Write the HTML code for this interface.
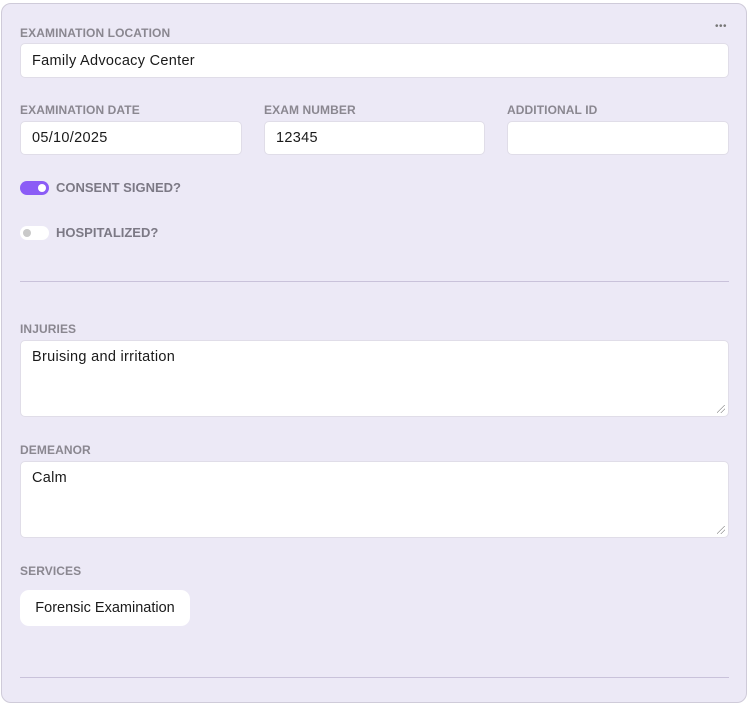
<!DOCTYPE html>
<html><head><meta charset="utf-8"><style>
*{box-sizing:border-box;margin:0;padding:0}
body{width:748px;height:687px;background:#fff;font-family:"Liberation Sans",sans-serif;overflow:hidden;position:relative}
.card{position:absolute;left:1px;top:3px;width:746px;height:700px;background:#ece9f6;border:1px solid #cfcbd9;border-radius:10px}
.lbl{position:absolute;font-size:12px;font-weight:bold;color:#8a8790;letter-spacing:0.1px}
.inp{position:absolute;background:#fff;border:1px solid #e0dde8;border-radius:5px;font-size:14.5px;color:#1a1a1a;padding-left:11px;display:flex;align-items:center;letter-spacing:0.3px}
.ta{align-items:flex-start;padding-top:8px}
.line{position:absolute;left:20px;width:709px;height:1px;background:#c9c2da}
.tog{position:absolute;left:20px;width:29px;height:14px;border-radius:7px}
.tlbl{position:absolute;left:56px;font-size:13px;font-weight:bold;color:#7c7985}
.grip{position:absolute;width:8px;height:8px;right:3px;bottom:3px;background:linear-gradient(135deg,transparent 45%,#999 45%,#999 52%,transparent 52%,transparent 70%,#999 70%,#999 77%,transparent 77%)}
</style></head><body>
<div class="card"></div>
<div style="position:absolute;left:715px;top:21px;font-size:10px;color:#777;letter-spacing:0.5px">•••</div>
<div class="lbl" style="left:20px;top:26px">EXAMINATION LOCATION</div>
<div class="inp" style="left:20px;top:43px;width:709px;height:35px">Family Advocacy Center</div>
<div class="lbl" style="left:20px;top:103px">EXAMINATION DATE</div>
<div class="inp" style="left:20px;top:121px;width:222px;height:34px">05/10/2025</div>
<div class="lbl" style="left:264px;top:103px">EXAM NUMBER</div>
<div class="inp" style="left:264px;top:121px;width:221px;height:34px">12345</div>
<div class="lbl" style="left:507px;top:103px">ADDITIONAL ID</div>
<div class="inp" style="left:507px;top:121px;width:222px;height:34px"></div>
<div class="tog" style="top:181px;background:#8b5cf6"><div style="position:absolute;right:3px;top:3px;width:8px;height:8px;border-radius:50%;background:#fff"></div></div>
<div class="tlbl" style="top:180px">CONSENT SIGNED?</div>
<div class="tog" style="top:226px;background:#fff"><div style="position:absolute;left:3px;top:3px;width:8px;height:8px;border-radius:50%;background:#c9c9c9"></div></div>
<div class="tlbl" style="top:225px">HOSPITALIZED?</div>
<div class="line" style="top:281px"></div>
<div class="lbl" style="left:20px;top:322px">INJURIES</div>
<div class="inp ta" style="left:20px;top:340px;width:709px;height:77px">Bruising and irritation<div class="grip"></div></div>
<div class="lbl" style="left:20px;top:443px">DEMEANOR</div>
<div class="inp ta" style="left:20px;top:461px;width:709px;height:77px">Calm<div class="grip"></div></div>
<div class="lbl" style="left:20px;top:564px">SERVICES</div>
<div style="position:absolute;left:20px;top:590px;width:170px;height:36px;background:#fff;border-radius:9px;font-size:14.5px;color:#1a1a1a;display:flex;align-items:center;justify-content:center">Forensic Examination</div>
<div class="line" style="top:677px"></div>
</body></html>
